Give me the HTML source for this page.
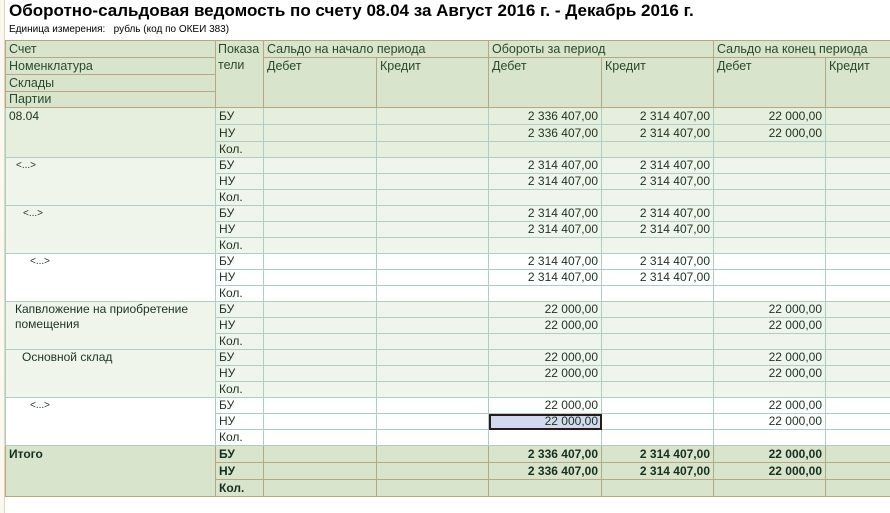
<!DOCTYPE html>
<html><head><meta charset="utf-8"><style>
body{margin:0;width:890px;height:513px;overflow:hidden;background:#fff;font-family:"Liberation Sans",Arial,sans-serif;position:relative}
.strip{position:absolute;left:0;top:0;width:4px;height:513px;background:#fdf8ef;border-right:1px solid #e0d6c0}
h1{position:absolute;left:9px;top:1px;margin:0;font-size:17px;font-weight:bold;color:#000;white-space:nowrap;line-height:20px}
.unit{position:absolute;left:9px;top:24px;font-size:10px;color:#000}
table{position:absolute;left:5px;top:40px;border-collapse:collapse;table-layout:fixed;width:890px;font-size:12px;color:#1c3320}
td{border:1px solid #a9cfc6;padding:0 3px;height:15px;line-height:15px;white-space:nowrap;overflow:hidden;vertical-align:top}
.h td{background:#d8e4cc;border-color:#b8a783;color:#2a4a2a;font-size:12.5px;height:16px;line-height:16px}
.h.s td{height:15px;line-height:15px}
.n{text-align:right}
.g1 td{background:#e6eedd}
.g1.b td{height:16px;line-height:16px}
.g2 td{background:#f0f5ec}
.g3 td{background:#fff}
.t td{background:#d8e4cc;border-color:#b8a783;font-weight:bold;color:#163020;height:16px;line-height:16px}
.sel{outline:2px solid #2a1a1a;outline-offset:-2px;background:#d3d9ef!important}
.sm{font-size:10px}
</style></head><body>
<div class="strip"></div>
<h1>Оборотно-сальдовая ведомость по счету 08.04 за Август 2016 г. - Декабрь 2016 г.</h1>
<div class="unit">Единица измерения:&nbsp;&nbsp; рубль (код по ОКЕИ 383)</div>
<table>
<colgroup><col style="width:210px"><col style="width:48px"><col style="width:113px"><col style="width:112px"><col style="width:113px"><col style="width:112px"><col style="width:112px"><col style="width:70px"></colgroup>
<tr class="h"><td>Счет</td><td rowspan="4" style="padding:0 2px">Показа<br>тели</td><td colspan="2">Сальдо на начало периода</td><td colspan="2">Обороты за период</td><td colspan="2">Сальдо на конец периода</td></tr>
<tr class="h"><td>Номенклатура</td><td rowspan="3">Дебет</td><td rowspan="3">Кредит</td><td rowspan="3">Дебет</td><td rowspan="3">Кредит</td><td rowspan="3">Дебет</td><td rowspan="3">Кредит</td></tr>
<tr class="h"><td>Склады</td></tr>
<tr class="h s"><td>Партии</td></tr>

<tr class="g1 b"><td rowspan="3">08.04</td><td>БУ</td><td></td><td></td><td class="n">2 336 407,00</td><td class="n">2 314 407,00</td><td class="n">22 000,00</td><td></td></tr>
<tr class="g1 b"><td>НУ</td><td></td><td></td><td class="n">2 336 407,00</td><td class="n">2 314 407,00</td><td class="n">22 000,00</td><td></td></tr>
<tr class="g1"><td>Кол.</td><td></td><td></td><td></td><td></td><td></td><td></td></tr>

<tr class="g2"><td rowspan="3" class="sm" style="padding-left:10px">&lt;...&gt;</td><td>БУ</td><td></td><td></td><td class="n">2 314 407,00</td><td class="n">2 314 407,00</td><td></td><td></td></tr>
<tr class="g2"><td>НУ</td><td></td><td></td><td class="n">2 314 407,00</td><td class="n">2 314 407,00</td><td></td><td></td></tr>
<tr class="g2"><td>Кол.</td><td></td><td></td><td></td><td></td><td></td><td></td></tr>

<tr class="g2"><td rowspan="3" class="sm" style="padding-left:17px">&lt;...&gt;</td><td>БУ</td><td></td><td></td><td class="n">2 314 407,00</td><td class="n">2 314 407,00</td><td></td><td></td></tr>
<tr class="g2"><td>НУ</td><td></td><td></td><td class="n">2 314 407,00</td><td class="n">2 314 407,00</td><td></td><td></td></tr>
<tr class="g2"><td>Кол.</td><td></td><td></td><td></td><td></td><td></td><td></td></tr>

<tr class="g3"><td rowspan="3" class="sm" style="padding-left:24px">&lt;...&gt;</td><td>БУ</td><td></td><td></td><td class="n">2 314 407,00</td><td class="n">2 314 407,00</td><td></td><td></td></tr>
<tr class="g3"><td>НУ</td><td></td><td></td><td class="n">2 314 407,00</td><td class="n">2 314 407,00</td><td></td><td></td></tr>
<tr class="g3"><td>Кол.</td><td></td><td></td><td></td><td></td><td></td><td></td></tr>

<tr class="g2"><td rowspan="3" style="padding-left:9px;white-space:normal">Капвложение на приобретение помещения</td><td>БУ</td><td></td><td></td><td class="n">22 000,00</td><td></td><td class="n">22 000,00</td><td></td></tr>
<tr class="g2"><td>НУ</td><td></td><td></td><td class="n">22 000,00</td><td></td><td class="n">22 000,00</td><td></td></tr>
<tr class="g2"><td>Кол.</td><td></td><td></td><td></td><td></td><td></td><td></td></tr>

<tr class="g2"><td rowspan="3" style="padding-left:16px">Основной склад</td><td>БУ</td><td></td><td></td><td class="n">22 000,00</td><td></td><td class="n">22 000,00</td><td></td></tr>
<tr class="g2"><td>НУ</td><td></td><td></td><td class="n">22 000,00</td><td></td><td class="n">22 000,00</td><td></td></tr>
<tr class="g2"><td>Кол.</td><td></td><td></td><td></td><td></td><td></td><td></td></tr>

<tr class="g3"><td rowspan="3" class="sm" style="padding-left:24px">&lt;...&gt;</td><td>БУ</td><td></td><td></td><td class="n">22 000,00</td><td></td><td class="n">22 000,00</td><td></td></tr>
<tr class="g3"><td>НУ</td><td></td><td></td><td class="n sel">22 000,00</td><td></td><td class="n">22 000,00</td><td></td></tr>
<tr class="g3"><td>Кол.</td><td></td><td></td><td></td><td></td><td></td><td></td></tr>

<tr class="t"><td rowspan="3">Итого</td><td>БУ</td><td></td><td></td><td class="n">2 336 407,00</td><td class="n">2 314 407,00</td><td class="n">22 000,00</td><td></td></tr>
<tr class="t"><td>НУ</td><td></td><td></td><td class="n">2 336 407,00</td><td class="n">2 314 407,00</td><td class="n">22 000,00</td><td></td></tr>
<tr class="t"><td>Кол.</td><td></td><td></td><td></td><td></td><td></td><td></td></tr>
</table>
</body></html>
